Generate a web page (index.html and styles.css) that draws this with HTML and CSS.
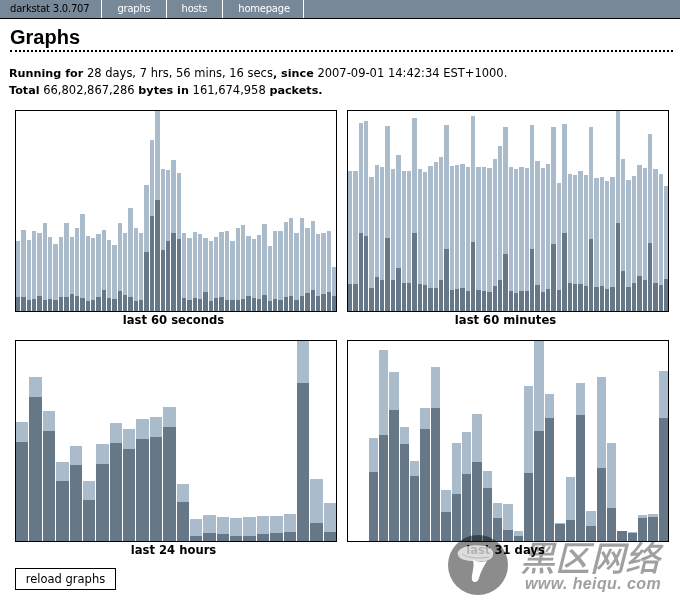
FILE: index.html
```html
<!DOCTYPE html>
<html lang="en">
<head>
<meta charset="utf-8">
<title>Graphs</title>
<link rel="stylesheet" href="styles.css">
</head>
<body>
<nav class="menu">
  <span class="menu-item menu-title">darkstat 3.0.707</span>
  <a class="menu-item" href="#">graphs</a>
  <a class="menu-item" href="#">hosts</a>
  <a class="menu-item" href="#">homepage</a>
</nav>
<main class="content">
  <h1 class="pagename">Graphs</h1>
  <p class="summary">
    <b>Running for</b> 28 days, 7 hrs, 56 mins, 16 secs<b>, since</b> 2007-09-01 14:42:34 EST+1000.<br>
    <b>Total</b> 66,802,867,286 <b>bytes in</b> 161,674,958 <b>packets.</b>
  </p>
  <div class="graphs">
    <figure class="graph"><svg class="plot" id="g-seconds" width="320" height="200"></svg><figcaption class="caption">last 60 seconds</figcaption></figure>
    <figure class="graph"><svg class="plot" id="g-minutes" width="320" height="200"></svg><figcaption class="caption">last 60 minutes</figcaption></figure>
    <figure class="graph"><svg class="plot" id="g-hours" width="320" height="200"></svg><figcaption class="caption">last 24 hours</figcaption></figure>
    <figure class="graph"><svg class="plot" id="g-days" width="320" height="200"></svg><figcaption class="caption">last 31 days</figcaption></figure>
  </div>
  <button class="reload" type="button">reload graphs</button>
</main>
<div class="watermark">
  <svg class="wm-disc" width="60" height="60" viewBox="0 0 60 60"><circle cx="30" cy="30" r="30"/></svg>
  <div class="wm-text">
    <div class="wm-cn">黑区网络</div>
    <div class="wm-url">www. heiqu. com</div>
  </div>
  <svg class="wm-mushroom" width="60" height="60" viewBox="0 0 60 60">
    <path class="wm-cap" d="M10 17C13 11 26 9 37 11C43 12 46 16 45 20C44 24 40 26 35 26C27 27 14 26 11 22C10 20 9 19 10 17Z"/>
    <path class="wm-stem" d="M25 25C29 27 34 27 39 26C36 31 33 36 31 43C30 48 25 48 24 45C23 40 27 32 25 25Z"/>
    <path class="wm-gill" d="M14 19C20 23 30 24 41 22"/>
  </svg>
</div>
<script src="graphs.js"></script>
</body>
</html>
```
FILE: styles.css
```css
html, body {
  margin: 0;
  padding: 0;
  background: #fff;
  color: #000;
  font-family: "DejaVu Sans", Verdana, sans-serif;
  font-size: 11px;
}
.menu {
  display: flex;
  height: 18px;
  background: #778899;
  border-bottom: 1px solid #000;
  line-height: 18px;
  font-size: 10px;
  letter-spacing: -.22px;
}
.menu-item {
  padding: 0 15px;
  color: #fff;
  text-decoration: none;
  border-right: 1px solid #fff;
}
.menu-item:last-child {
  padding-right: 13px;
}
.menu-title {
  padding: 0 12px 0 10px;
  color: #000;
}
.content {
  padding: 0 7px 0 9px;
}
.pagename {
  margin: 0 0 0 1px;
  padding: 7px 0 1px;
  height: 23px;
  line-height: 23px;
  font-family: "Liberation Sans", Arial, sans-serif;
  font-size: 20px;
  font-weight: bold;
  border-bottom: 2px dotted #000;
}
.summary {
  margin: 0;
  padding-top: 13px;
  line-height: 16px;
  font-size: 11.5px;
}
.summary b {
  font-size: 11.2px;
}
.graphs {
  display: grid;
  grid-template-columns: 322px 322px;
  column-gap: 10px;
  row-gap: 13px;
  margin: 11px 0 0 6px;
}
.graph {
  margin: 0;
}
.plot {
  display: block;
  border: 1px solid #000;
  shape-rendering: crispEdges;
}
.bar-total { fill: #aabbcc; }
.bar-in { fill: #667788; }
.caption {
  padding-right: 5px;
  height: 15px;
  line-height: 17px;
  text-align: center;
  font-weight: bold;
  font-size: 11.6px;
}
.reload {
  display: block;
  box-sizing: border-box;
  width: 101px;
  height: 22px;
  margin: 11px 0 0 6px;
  padding: 0;
  background: #fff;
  border: 1px solid #000;
  color: #000;
  font: 11.5px "DejaVu Sans", Verdana, sans-serif;
}
.watermark {
  position: absolute;
  left: 448px;
  top: 535px;
  width: 225px;
  height: 60px;
  pointer-events: none;
}
.wm-disc,
.wm-mushroom {
  position: absolute;
  left: 0;
  top: 0;
}
.wm-disc {
  mix-blend-mode: multiply;
  fill: #8c8c8c;
}
.wm-text {
  position: absolute;
  left: 72px;
  top: 3px;
  width: 145px;
  color: #a0a0a0;
  mix-blend-mode: multiply;
}
.wm-cn {
  height: 36px;
  line-height: 36px;
  font-family: "Noto Sans CJK SC", sans-serif;
  font-size: 35px;
  font-weight: 500;
  font-style: italic;
  white-space: nowrap;
}
.wm-url {
  margin: 2px 0 0 5px;
  height: 15px;
  line-height: 15px;
  font-family: "Liberation Sans", sans-serif;
  font-size: 16px;
  font-weight: bold;
  font-style: italic;
  letter-spacing: .4px;
  white-space: nowrap;
}
.wm-cap { fill: rgba(255, 255, 255, .7); }
.wm-stem { fill: #fff; }
.wm-gill { fill: none; stroke: #b5b5b5; stroke-width: 1; }
```
FILE: graphs.js
```js
// Each bar is [total, in] in pixels of a 200px tall plot.
var GRAPHS = {
  "g-seconds": { pitch: 5.356, offset: .45, bars: [
    [70,14],[81,14],[71,11],[80,12],[78,15],[88,11],[74,12],[67,11],[74,14],[88,14],
    [74,17],[83,15],[97,13],[75,10],[73,11],[77,14],[81,21],[71,13],[66,12],[88,20],
    [78,16],[103,14],[83,10],[78,11],[126,59],[171,95],[200,111],[142,61],[141,70],[151,78],
    [138,72],[78,13],[73,11],[79,13],[77,12],[73,19],[70,10],[74,13],[79,14],[80,11],
    [70,11],[83,11],[86,12],[75,15],[72,13],[76,12],[87,16],[65,10],[80,12],[80,11],
    [89,14],[93,15],[78,11],[93,15],[83,18],[90,21],[77,15],[78,17],[80,19],[44,15]
  ] },
  "g-minutes": { pitch: 5.356, offset: .45, bars: [
    [140,27],[140,27],[188,78],[190,75],[134,23],[146,34],[144,31],[185,73],[142,31],[156,43],
    [140,28],[140,28],[193,78],[142,27],[139,26],[145,23],[149,23],[154,31],[186,62],[145,21],
    [146,22],[147,23],[144,20],[195,69],[144,21],[144,20],[143,19],[152,25],[165,31],[184,57],
    [144,20],[142,18],[144,20],[143,20],[186,62],[150,26],[143,19],[147,22],[184,67],[128,21],
    [187,78],[137,28],[136,27],[140,27],[136,25],[184,72],[133,24],[134,25],[130,22],[134,24],
    [200,88],[152,40],[131,24],[135,28],[146,35],[143,31],[177,68],[142,28],[137,26],[125,32]
  ] },
  "g-hours": { pitch: 13.38, offset: .5, bars: [
    [119,99],[164,144],[130,110],[79,60],[95,76],[60,41],[97,77],[118,98],[112,92],[122,102],
    [124,104],[134,114],[57,39],[22,5],[26,8],[24,7],[23,5],[24,5],[25,7],[25,8],
    [27,9],[200,158],[62,18],[38,9]
  ] },
  "g-days": { pitch: 10.36, offset: .45, bars: [
    [0,0],[0,0],[103,69],[191,106],[169,131],[114,97],[80,65],[133,112],[174,133],[51,29],
    [98,47],[109,67],[127,79],[70,53],[38,23],[37,11],[10,5],[155,68],[200,110],[147,123],
    [18,17],[64,21],[158,126],[30,15],[164,73],[98,33],[10,10],[9,8],[26,23],[27,24],[170,123]
  ] }
};

var SVG_NS = "http://www.w3.org/2000/svg";

function addBar(svg, cls, x, w, h) {
  var r = document.createElementNS(SVG_NS, "rect");
  r.setAttribute("class", cls);
  r.setAttribute("x", x);
  r.setAttribute("y", 200 - h);
  r.setAttribute("width", w);
  r.setAttribute("height", h);
  svg.appendChild(r);
}

Object.keys(GRAPHS).forEach(function (id) {
  var g = GRAPHS[id], svg = document.getElementById(id);
  g.bars.forEach(function (b, i) {
    var x = Math.floor(i * g.pitch + g.offset);
    var next = Math.floor((i + 1) * g.pitch + g.offset);
    var w = Math.min(next - x - 1, 320 - x);
    addBar(svg, "bar-total", x, w, b[0]);
    addBar(svg, "bar-in", x, w, b[1]);
  });
});
```
